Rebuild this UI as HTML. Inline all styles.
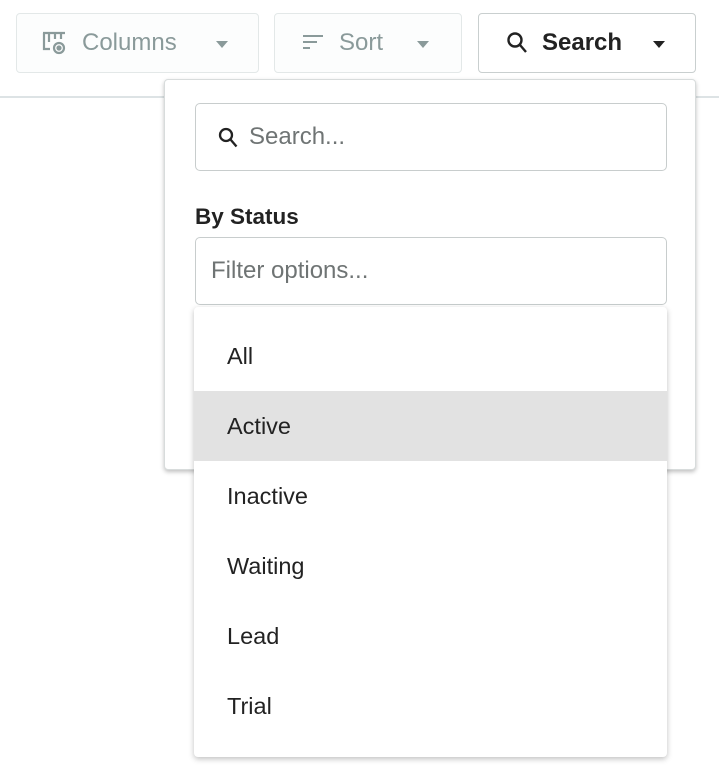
<!DOCTYPE html>
<html><head><style>
body{margin:0;width:719px;height:781px;background:#fff;font-family:"Liberation Sans",sans-serif;position:relative;overflow:hidden}
.btn{position:absolute;top:13px;height:60px;border:1px solid #e3e8e8;border-radius:4px;background:#fcfdfd;box-sizing:border-box;display:flex;align-items:center;font-size:24px;color:#8a9a9a}
.tri{width:0;height:0;border-left:6px solid transparent;border-right:6px solid transparent;border-top:7px solid #8a9a9a;position:absolute}
.line{position:absolute;top:96px;left:0;width:719px;height:2px;background:#dde3e5}
.pop{position:absolute;left:164px;top:79px;width:532px;height:391px;background:#fff;border:1px solid #d8dcdc;border-radius:4px;box-shadow:0 2px 4px rgba(0,0,0,.25);box-sizing:border-box}
.inp{position:absolute;left:195px;width:472px;height:68px;border:1px solid #c8cdcd;border-radius:5px;box-sizing:border-box;font-size:24px;color:#6f7474;display:flex;align-items:center}
.list{position:absolute;left:194px;top:307px;width:473px;height:450px;background:#fff;border-radius:4px;box-shadow:0 2px 6px rgba(0,0,0,.25)}
.it{height:70px;line-height:70px;padding-left:33px;font-size:23.5px;color:#222}
</style></head><body>
<div class="btn" style="left:16px;width:243px">
<svg style="position:absolute;left:24px;top:16px" width="28" height="26" viewBox="0 0 28 26" fill="none" stroke="#8a9a9a" stroke-width="2.2"><path d="M2 3h22M3 3v16h6M8 3v9M14 3v6M20 3v6"/><circle cx="18" cy="18" r="5"/><circle cx="18" cy="18" r="1.5" fill="#8a9a9a"/></svg>
<span style="position:absolute;left:65px">Columns</span><div class="tri" style="left:199px;top:27px"></div></div>
<div class="btn" style="left:274px;width:188px">
<svg style="position:absolute;left:27px;top:20px" width="24" height="18" viewBox="0 0 24 18" stroke="#8a9a9a" stroke-width="2"><path d="M1 2h20M1 8h14M1 14h7"/></svg>
<span style="position:absolute;left:64px">Sort</span><div class="tri" style="left:142px;top:27px"></div></div>
<div class="btn" style="left:478px;width:218px;border-color:#c9cfcf;background:#fff;color:#222;font-weight:bold">
<svg style="position:absolute;left:27px;top:17px" width="22" height="24" viewBox="0 0 22 24" fill="none" stroke="#222" stroke-width="2.4"><circle cx="9" cy="9" r="6.5"/><path d="M14 14l6 7"/></svg>
<span style="position:absolute;left:63px;font-weight:600">Search</span><div class="tri" style="left:174px;top:27px;border-top-color:#222"></div></div>
<div class="line"></div>
<div class="pop"></div>
<div class="inp" style="top:103px">
<svg style="position:absolute;left:22px;top:23px" width="20" height="22" viewBox="0 0 20 22" fill="none" stroke="#222" stroke-width="2.3"><circle cx="8" cy="8" r="6"/><path d="M12.5 12.5l6 7"/></svg>
<span style="position:absolute;left:53px">Search...</span></div>
<div style="position:absolute;left:195px;top:204px;font-size:22.5px;font-weight:bold;color:#222">By Status</div>
<div class="inp" style="top:237px"><span style="position:absolute;left:15px">Filter options...</span></div>
<div class="list">
<div class="it" style="margin-top:14px">All</div>
<div class="it" style="background:#e2e2e2">Active</div>
<div class="it">Inactive</div>
<div class="it">Waiting</div>
<div class="it">Lead</div>
<div class="it">Trial</div>
</div>
</body></html>
